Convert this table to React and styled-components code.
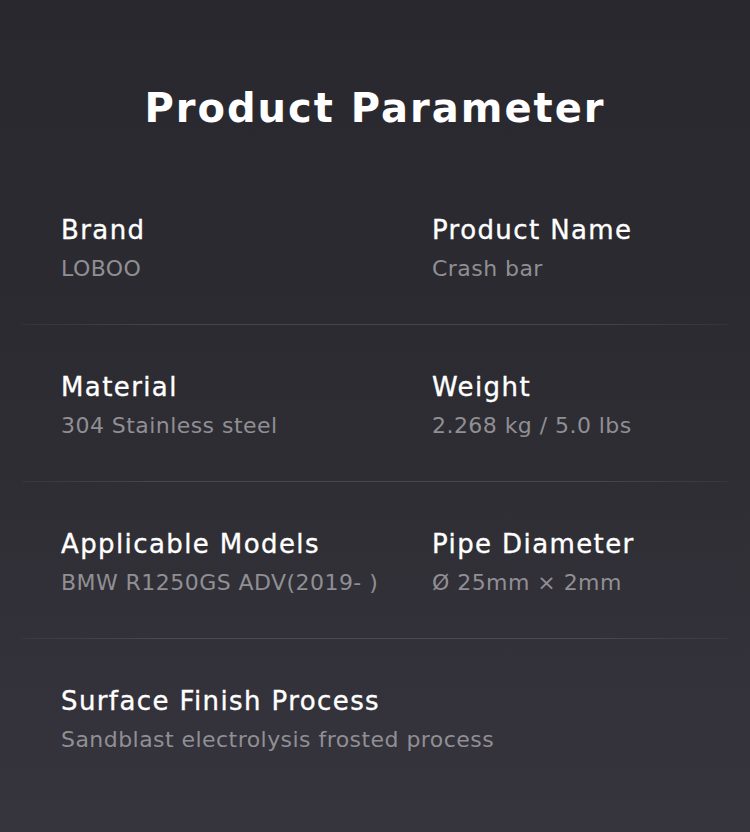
import React from "react";
import styled, { createGlobalStyle } from "styled-components";

const Global = createGlobalStyle`
  html, body { margin: 0; padding: 0; }
  body { background: #2a292e; font-family: "DejaVu Sans", Inter, sans-serif; }
`;

const Page = styled.div`
  width: 750px;
  min-height: 832px;
  box-sizing: border-box;
  background: linear-gradient(180deg, #29282e 0%, #2c2b31 40%, #36343d 100%);
  display: flex;
  flex-direction: column;
  overflow: hidden;
`;

const Title = styled.h1`
  margin: 0;
  height: 168px;
  box-sizing: border-box;
  padding-top: 80px;
  text-align: center;
  color: #ffffff;
  font-family: "DejaVu Sans", sans-serif;
  font-weight: 700;
  font-size: 40px;
  line-height: 56px;
  letter-spacing: 2px;
`;

const Row = styled.div`
  display: grid;
  grid-template-columns: 371px 1fr;
  padding: 44px 61px 39px;
`;

const Item = styled.div`
  display: flex;
  flex-direction: column;
  gap: 5px;
  grid-column: ${p => (p.$wide ? "1 / -1" : "auto")};
`;

const Label = styled.div`
  color: #ffffff;
  font-weight: 400;
  font-size: 26px;
  line-height: 36px;
  letter-spacing: 1.4px;
  -webkit-text-stroke: 0.35px #ffffff;
  white-space: nowrap;
`;

const Value = styled.div`
  color: #908f94;
  font-weight: 400;
  font-size: 22px;
  line-height: 32px;
  letter-spacing: 0.45px;
  white-space: nowrap;
`;

const Divider = styled.div`
  height: 1px;
  margin: 0 22px;
  background: linear-gradient(90deg, rgba(255,255,255,0.04) 0%, rgba(255,255,255,0.12) 20%, rgba(255,255,255,0.12) 80%, rgba(255,255,255,0.04) 100%);
`;

const rows = [
  [["Brand", "LOBOO"], ["Product Name", "Crash bar"]],
  [["Material", "304 Stainless steel"], ["Weight", "2.268 kg / 5.0 lbs"]],
  [["Applicable Models", "BMW R1250GS ADV(2019- )"], ["Pipe Diameter", "Ø 25mm × 2mm"]],
  [["Surface Finish Process", "Sandblast electrolysis frosted process"]],
];

export default function App() {
  return (
    <Page>
      <Global />
      <Title>Product Parameter</Title>
      {rows.map((r, i) => (
        <React.Fragment key={i}>
          {i > 0 && <Divider />}
          <Row>
            {r.map(([l, v]) => (
              <Item key={l} $wide={r.length === 1}>
                <Label>{l}</Label>
                <Value>{v}</Value>
              </Item>
            ))}
          </Row>
        </React.Fragment>
      ))}
    </Page>
  );
}
